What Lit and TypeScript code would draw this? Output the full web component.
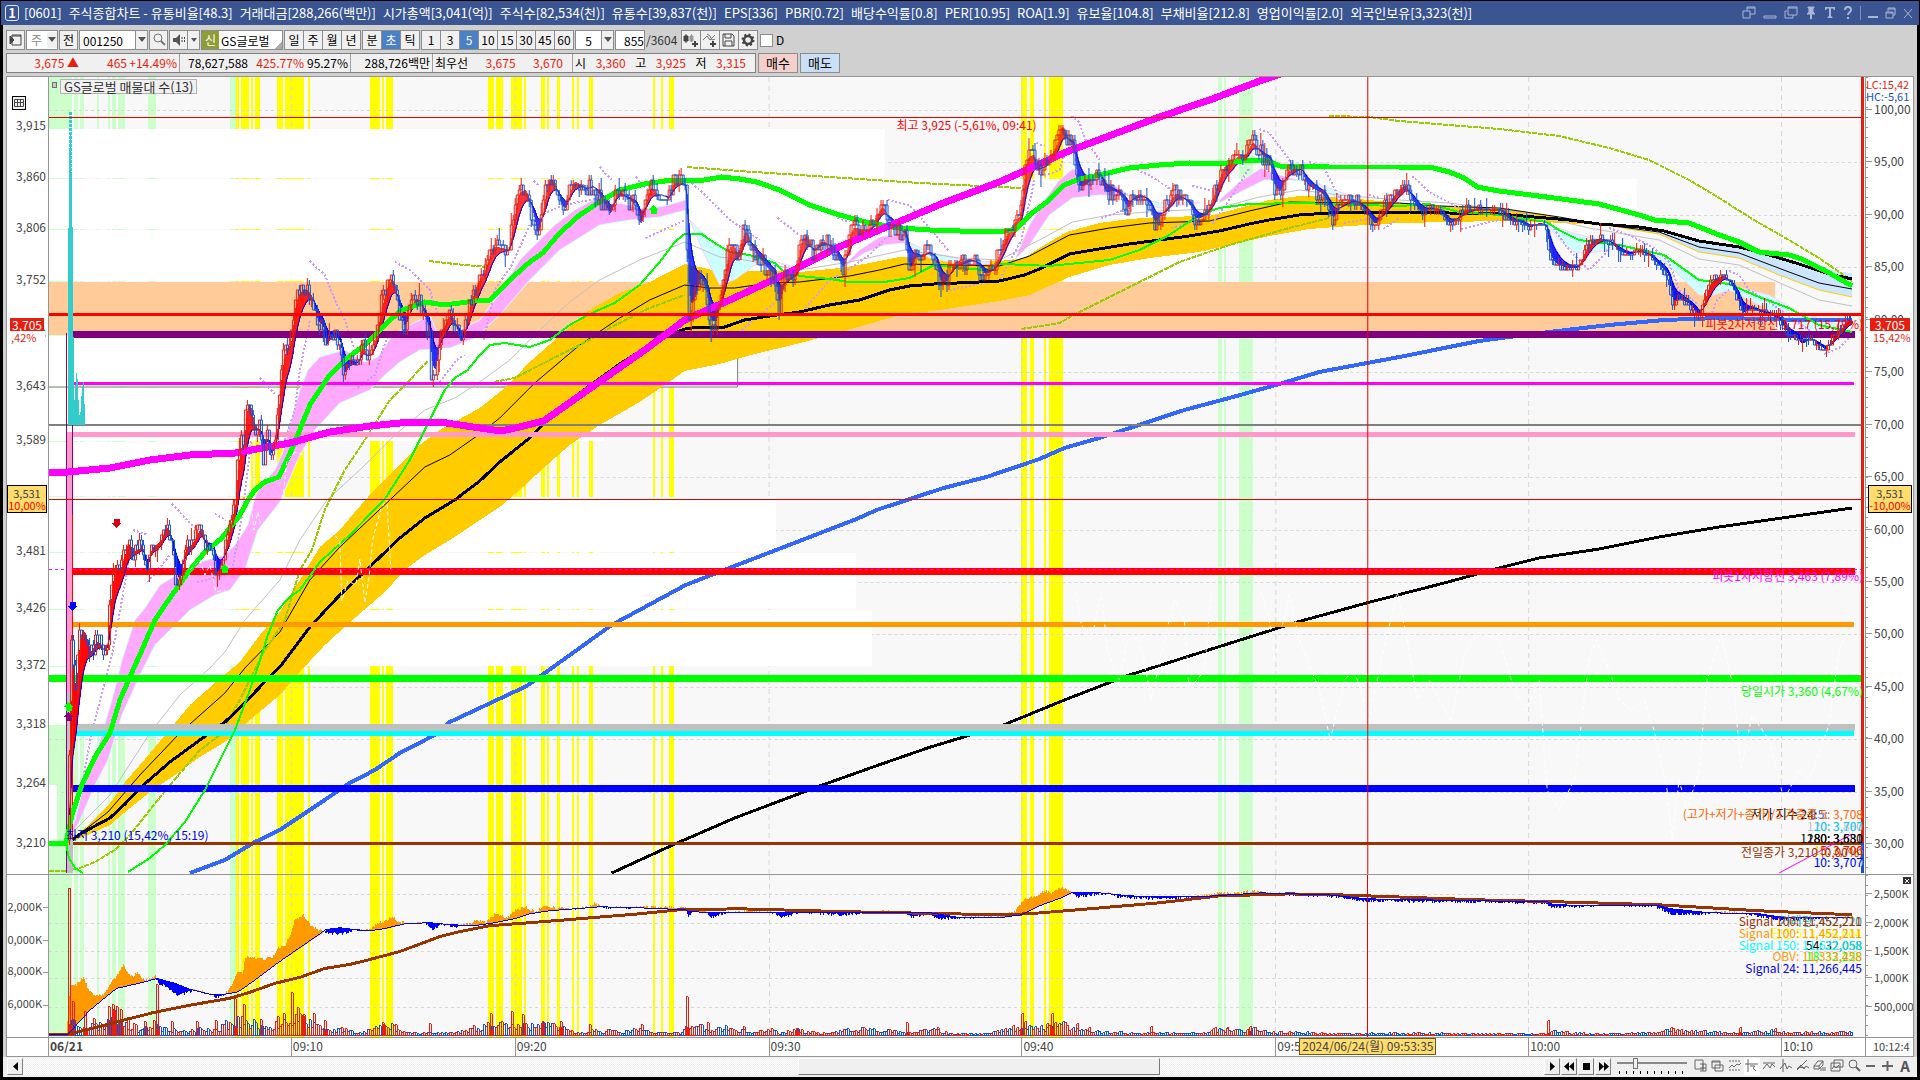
import { LitElement, html, svg, css } from "lit";
import { customElement } from "lit/decorators.js";

type P = [number, number];

/* ---------- coordinate helpers ---------- */
const LEFT = 49, RIGHT = 1866, WIDTH = RIGHT - LEFT;
const MAIN_TOP = 77, MAIN_H = 797;
const SUB_TOP = 875, SUB_H = 163;

const pts = (s: string): P[] =>
  s.trim().split(/\s+/).map((p) => p.split(",").map(Number) as P);
const px = (x: number) => `${((x - LEFT) / WIDTH) * 100}%`;
const pyMain = (y: number) => `${((y - MAIN_TOP) / MAIN_H) * 100}%`;
const pySub = (y: number) => `${((y - SUB_TOP) / SUB_H) * 100}%`;

function at(path: P[], x: number): number {
  if (x <= path[0][0]) return path[0][1];
  for (let i = 1; i < path.length; i++) {
    const [x1, y1] = path[i];
    if (x <= x1) {
      const [x0, y0] = path[i - 1];
      return x1 === x0 ? y1 : y0 + ((y1 - y0) * (x - x0)) / (x1 - x0);
    }
  }
  return path[path.length - 1][1];
}
function random(seed: number) {
  let s = seed;
  return () => {
    s = (s * 1664525 + 1013904223) % 4294967296;
    return s / 4294967296;
  };
}

/* ---------- series ---------- */
const price = pts(`68,840 69,760 70,650 72,620 74,700 76,680 78,640 82,625 86,640 90,655 95,640 100,645 104,655 107,640 110,590 114,560 118,575 122,560
127,540 132,552 137,550 142,545 146,580 150,545 155,545 160,540 166,525 170,535 175,580 180,580 184,545 190,545 196,535 200,525 205,550 212,545 216,580
222,555 226,540 230,520 235,500 236,470 240,440 243,445 246,400 250,405 254,430 260,430 263,460 267,435 271,460 276,430 280,370 285,345 290,345 294,300
300,290 307,290 312,300 317,325 322,325 326,350 330,335 335,335 340,345 343,380 348,365 354,365 358,360 362,340 366,360 372,350 377,325 382,300 386,285
391,278 394,285 398,310 404,330 409,310 413,298 419,300 424,320 429,330 431,375 435,370 440,330 446,320 450,312 456,330 461,345 466,320 470,300 475,285
484,270 492,245 500,248 508,250 514,210 518,190 525,190 530,205 537,238 544,200 548,175 555,185 560,205 565,210 572,180 580,185 586,190 592,185 598,195
604,205 610,215 617,185 622,195 628,200 636,205 640,230 645,200 650,185 656,195 662,195 668,200 673,180 680,180 686,188 688,325 693,300 700,275 706,290
710,325 716,320 724,270 731,240 737,255 745,228 752,250 760,260 768,270 774,275 779,310 783,280 790,275 796,270 800,240 807,235 813,255 820,240 828,245
836,255 843,270 848,245 852,225 860,230 868,230 876,215 882,205 888,220 896,228 905,235 909,275 915,255 922,258 928,250 935,258 940,285 947,280 954,260
962,262 970,258 978,265 984,275 993,270 1000,250 1008,230 1016,220 1020,215 1026,155 1034,155 1038,170 1045,165 1050,155 1056,145 1062,122 1067,140 1073,145
1078,190 1084,185 1090,180 1096,170 1100,175 1105,195 1112,190 1120,195 1128,210 1133,195 1142,195 1150,205 1154,225 1160,215 1168,205 1175,192 1183,198
1190,205 1195,220 1205,215 1212,200 1218,180 1224,165 1230,165 1238,155 1246,155 1252,140 1258,150 1264,158 1270,160 1274,190 1281,190 1288,170 1295,168
1300,165 1306,185 1315,190 1324,195 1333,220 1340,205 1348,200 1356,200 1364,210 1375,225 1381,215 1390,200 1400,188 1406,185 1412,200 1418,210 1425,212
1432,208 1440,212 1450,225 1456,218 1465,210 1478,208 1490,210 1500,210 1511,222 1520,222 1530,228 1540,222 1547,228 1550,260 1558,265 1566,268 1578,268
1585,250 1592,240 1600,238 1610,242 1620,252 1630,255 1638,250 1650,256 1658,265 1668,275 1673,305 1680,298 1690,305 1700,318 1707,290 1714,278 1725,275
1733,288 1738,300 1742,315 1750,308 1760,312 1772,315 1780,320 1788,335 1795,335 1802,345 1810,338 1818,345 1825,350 1832,340 1840,330 1848,318 1853,322`);

const magentaMA = `48,472 68,472 110,468 150,460 190,455 235,453 290,443 330,432 370,426 410,422 440,422 480,428 501,431 520,427 544,421 598,383 648,348
685,320 730,300 784,275 837,248 887,227 944,203 1000,182 1067,152 1160,117 1213,99 1263,80 1284,73`;
const greenMA = `49,843 66,843 72,815 82,785 95,757 110,733 120,700 133,670 142,650 155,620 172,595 190,570 205,552 222,538 240,515 248,500 255,490 265,482
279,477 293,447 310,405 330,375 345,360 365,345 380,330 400,311 425,302 445,305 475,301 490,300 510,280 530,262 543,253 560,233 580,215 600,202 620,190
645,184 665,181 705,180 722,177 740,179 757,182 780,190 810,205 840,215 870,223 900,228 930,230 960,231 1000,232 1017,229 1030,215 1050,200 1065,185
1080,179 1100,175 1130,168 1160,165 1190,163 1220,164 1250,160 1267,160 1280,166 1330,167 1400,167 1430,167 1450,172 1465,178 1478,187 1500,191 1555,198
1600,204 1640,215 1655,220 1690,223 1715,233 1740,242 1760,252 1790,255 1800,258 1825,270 1853,286`;
const blackMA = `68,843 80,834 95,826 110,818 125,804 140,788 170,762 200,740 225,722 240,708 260,687 280,667 310,627 340,595 375,562 400,538 425,518 455,500
480,481 500,462 530,438 545,423 580,393 620,364 650,345 670,335 685,329 700,327 725,327 745,320 770,316 800,312 830,305 860,300 890,290 910,286 935,284
980,282 1000,281 1025,275 1040,269 1070,254 1100,249 1130,244 1160,240 1190,236 1220,231 1250,224 1270,220 1300,215 1330,213 1370,212 1410,212 1450,213
1500,214 1570,220 1600,224 1640,227 1665,231 1700,241 1740,247 1760,252 1800,264 1830,274 1853,279`;
const blackThin = `68,843 108,812 140,775 180,733 225,693 245,668 280,632 310,580 340,547 390,500 425,467 450,455 480,434 500,418 535,383 580,345 620,318
650,300 685,285 710,288 735,288 770,283 800,282 850,276 880,270 905,264 950,265 1000,266 1030,256 1070,235 1110,228 1150,223 1210,221 1250,211 1290,202
1350,203 1400,203 1440,206 1500,208 1560,217 1600,224 1660,232 1700,247 1740,253 1790,272 1820,283 1853,289`;
const greyThin = `75,830 110,795 150,733 180,695 210,668 225,652 245,620 280,580 300,540 327,500 360,470 395,435 425,410 455,398 480,382 510,360 535,335 570,302
600,280 640,260 685,242 720,257 745,260 800,270 850,262 905,250 960,258 1000,260 1040,240 1073,222 1110,215 1160,211 1215,209 1260,197 1300,190 1340,195
1400,200 1450,203 1520,212 1590,228 1660,240 1700,259 1740,265 1790,287 1820,300 1853,306`;
const greenThin = `128,872 150,858 165,845 185,822 205,790 225,750 235,730 250,690 258,667 268,635 278,610 290,597 300,590 320,562 350,535 385,499 410,460
430,420 445,390 455,378 468,370 480,355 490,345 505,343 530,347 550,340 570,325 590,314 615,303 640,285 660,262 675,242 685,234 702,234 715,243 730,252
750,255 775,263 785,272 800,276 830,279 850,282 885,282 910,278 925,270 935,265 960,268 985,270 1000,264 1030,265 1050,266 1090,262 1110,260 1140,250
1170,235 1185,225 1200,215 1220,208 1250,204 1300,203 1360,205 1400,206 1430,204 1460,212 1500,215 1547,222 1560,230 1580,240 1620,245 1665,255 1700,280
1730,284 1760,297 1790,308 1820,325 1853,332`;
const blueMA = `190,873 225,860 255,842 280,830 310,810 350,783 375,770 400,753 435,735 450,722 480,708 527,686 612,625 686,585 735,566 857,519 877,510
944,488 987,477 1040,459 1065,448 1100,438 1185,410 1230,398 1280,384 1320,372 1400,357 1480,341 1510,337 1550,332 1610,325 1665,320 1720,318 1770,319
1800,320 1853,320`;
const blackLong = `612,873 673,845 735,818 820,786 882,764 931,747 1004,725 1065,700 1127,676 1225,645 1298,622 1371,602 1445,583 1500,568 1540,558 1600,549
1660,537 1720,527 1790,517 1853,508`;
const oliveDots = [
  `49,871 66,871 80,868 95,862 115,850 130,835 150,810 170,785 200,750 220,735 240,700 262,655 285,620 300,570 312,550 325,510 345,470 365,440 390,400 410,380 428,361`,
  `429,261 455,264 488,267`,
  `494,382 515,378 550,360 590,340 610,328 650,308 685,295`,
  `687,167 740,171 800,175 860,179 920,183 1000,187 1022,188`,
  `1022,329 1060,323 1080,312 1130,287 1180,262 1230,245 1290,228 1330,218`,
  `1330,116 1370,117 1400,121 1500,129 1560,136 1610,148 1650,160 1690,180 1720,198 1755,220 1790,240 1820,258 1853,281`,
];
const sarDots = [
  `310,261 325,275 335,300 345,320 355,350`, `395,262 410,270 430,290 438,315`, `260,378 276,395`, `172,504 195,528`, `215,514 226,520`, `133,530 148,535`,
  `83,780 92,730 103,690 112,655 122,600 130,555`, `148,582 170,555`, `197,582 225,575`, `232,570 240,530 248,470 251,440`, `285,440 295,410 300,370 310,320`,
  `358,388 375,375 388,335`, `440,382 457,360 465,355`, `484,340 495,290 512,265 530,225`, `540,215 565,205 600,198`, `534,181 540,186`, `600,167 612,180`,
  `636,177 648,190`, `646,238 686,220`, `686,178 700,190 730,220 760,240`, `778,218 800,235`, `838,218 850,222`, `888,200 910,205 930,228 950,252`,
  `742,330 775,303`, `806,308 830,280 840,275`, `848,270 870,255 886,238`, `950,290 1000,280 1022,240 1035,180`, `1072,116 1080,122 1085,138 1100,160`,
  `1037,143 1045,146`, `1045,176 1060,170 1065,155`, `1102,218 1130,208`, `1130,167 1150,175 1175,192`, `1172,228 1200,220`, `1193,186 1213,191`,
  `1213,224 1230,200 1250,168`, `1260,129 1270,133 1290,160 1300,175`, `1310,162 1325,168 1340,198`, `1345,223 1375,218`, `1370,195 1380,198`,
  `1384,229 1400,218`, `1413,176 1430,192 1460,208`, `1462,229 1500,220`, `1550,222 1570,250 1590,270 1605,255 1610,247`,
  `1610,228 1630,235 1655,248 1670,262 1680,290 1700,305`, `1710,320 1718,300 1730,290`, `1730,271 1740,275 1750,290 1770,302 1810,330 1822,338`,
  `1825,354 1840,348 1853,335`,
];
const whiteDots = [
  `325,535 331,531 340,541 342,601 348,581 356,585 360,559 365,603 369,579 373,539 381,509 387,499 391,569`,
  `190,570 200,560 205,575 210,565 216,592 225,590`, `251,500 254,530 258,512 262,530`, `283,500 287,460 295,452 305,455`,
  `1076,592 1082,625 1092,640 1102,592 1108,650 1120,680 1128,640 1140,638 1152,700 1165,640 1175,600 1185,620 1190,690 1205,670 1212,592`,
  `1262,592 1270,620 1275,660 1290,595 1300,640 1320,690 1331,740 1345,680 1355,670 1370,720 1382,660 1398,592 1408,640 1418,700 1430,680 1452,722
1465,655 1480,632 1500,640 1515,690 1527,710 1540,680 1548,790 1560,810 1575,780 1582,725 1590,660 1597,640 1610,670 1620,700 1632,710 1645,700
1655,730 1668,790 1673,840 1680,780 1688,810 1700,770 1708,680 1722,635 1735,690 1742,770 1753,715 1770,740 1785,800 1800,770 1810,780 1830,725
1840,650 1850,630`,
];

const cloud = (upper: string, lower: string) =>
  [...pts(upper), ...pts(lower).reverse()].map((p) => p.join(",")).join(" ");

const goldCloud = cloud(
  `68,843 85,828 108,806 125,782 140,765 165,735 190,705 215,683 240,662 260,635 280,612 300,580 320,547 340,530 355,512 370,495 400,465 420,445 440,430
480,408 505,388 530,362 555,340 590,310 620,293 650,282 685,264 700,267 720,272 740,272 770,270 800,272 840,268 870,263 900,257 930,256 960,262 1000,261
1025,258 1040,248 1067,232 1100,223 1130,219 1160,217 1210,216 1240,208 1270,200 1300,196 1340,197 1380,201 1420,205 1460,207 1500,208 1545,215 1600,224`,
  `68,843 90,834 110,825 130,808 150,792 175,775 200,757 225,742 250,720 280,695 300,672 325,645 355,618 385,592 405,570 425,555 450,540 480,520 500,507
520,490 545,467 570,445 600,425 640,402 665,385 685,371 720,364 755,354 780,348 805,342 830,335 855,328 900,315 940,310 980,304 1000,301 1030,295 1070,277
1110,265 1150,258 1200,252 1230,245 1270,236 1310,229 1350,226 1400,223 1450,222 1500,221 1545,222 1600,225`
);
const pinkClouds = [
  cloud(
    `68,843 75,820 85,780 100,740 112,700 122,660 135,620 145,608 160,585 180,573 200,562 225,555 235,545 248,525 255,497 262,484 275,470 283,452 290,425
300,390 308,370 320,357 345,350 365,362 378,357 393,335 410,325 430,315 440,340 455,332 480,320 500,293 520,260 535,245 555,225 575,210 597,198 610,205
620,203 640,208 650,208 665,206 686,200`,
    `68,843 80,820 95,785 108,760 122,715 140,675 155,645 170,630 190,610 215,595 230,590 245,570 258,530 280,502 285,490 300,455 315,430 340,403 370,390
385,375 400,362 420,350 450,348 475,338 500,315 530,280 560,250 600,225 630,220 660,217 686,210`
  ),
  cloud(`840,270 860,250 880,237 905,233`, `840,270 865,253 885,245 905,243`),
  cloud(`1015,260 1030,225 1045,200 1060,180 1073,169 1080,170 1100,180 1115,185 1130,195`, `1015,260 1030,245 1050,215 1073,198 1100,195 1130,196`),
  cloud(`1220,200 1240,182 1262,168 1280,175 1320,185`, `1220,203 1245,190 1265,180 1290,180 1320,183`),
];
const cyanClouds = [
  cloud(`688,218 700,230 715,245 740,253 770,258 790,268`, `690,220 705,255 720,285 735,280 755,265 780,263 800,268`),
  cloud(`905,240 930,252 960,259 990,262`, `905,244 930,258 960,264 990,264`),
  cloud(`1130,195 1160,203 1200,202`, `1130,198 1160,208 1200,203`),
  cloud(`1320,184 1340,192 1360,198`, `1320,185 1340,200 1360,206`),
  cloud(
    `1545,222 1570,232 1600,240 1650,250 1680,265 1700,278 1730,285 1770,295 1800,312 1853,330`,
    `1547,222 1560,240 1575,252 1590,253 1620,248 1640,250 1660,257 1680,275 1700,295 1715,295 1730,290 1760,305 1790,320 1820,335 1853,335`
  ),
];
const blueCloud = cloud(
  `1600,224 1660,232 1700,240 1740,246 1800,262 1840,272 1853,273`,
  `1600,224 1660,234 1700,252 1740,258 1780,275 1820,290 1853,297`
);

const bandsGreen: P[] = [[49, 72], [74, 78], [80, 84], [97, 99], [108, 110], [112, 116], [118, 125], [148, 156], [230, 236], [1219, 1223], [1225, 1227], [1240, 1254]];
const bandsYellow: P[] = [
  [236, 239], [241, 249], [251, 253], [255, 260], [277, 283], [285, 304], [308, 310], [370, 380], [382, 384], [386, 393], [488, 494], [496, 503],
  [511, 522], [524, 526], [541, 545], [547, 549], [557, 560], [572, 574], [577, 579], [589, 593], [653, 655], [661, 663], [669, 674],
  [1022, 1028], [1031, 1035], [1045, 1047], [1050, 1064],
];
const gridX = [291, 515, 769, 1022, 1276, 1529, 1782];
const gridMain = [110, 162, 215, 267, 320, 372, 425, 477, 530, 582, 634, 687, 739, 792, 844];
const gridSub = [894, 923, 951, 979, 1008];

/* price-by-volume boxes: top, bottom, right edge */
const profile: [number, number, number][] = [
  [129, 178, 885], [179, 229, 1638], [230, 281, 1209], [336, 387, 738], [388, 441, 604], [442, 496, 250],
  [497, 552, 776], [553, 609, 856], [610, 666, 872], [667, 725, 228], [785, 843, 57],
];

/* level lines: y centre, thickness, colour, from, to */
const levels: [number, number, string, number, number][] = [
  [314.5, 3, "#ff0000", 49, 1862], [334.5, 7, "#800080", 72, 1856], [383.5, 3, "#ff00ff", 73, 1855], [425, 2, "#808080", 49, 1862],
  [434.5, 5, "#ff99cc", 72, 1856], [571.5, 7, "#ff0000", 72, 1856], [624.5, 5, "#ff9900", 73, 1855], [678.5, 7, "#00ff00", 49, 1862],
  [727.5, 7, "#c0c0c0", 77, 1856], [733.5, 5, "#00ffff", 73, 1855], [788.5, 7, "#0000ff", 73, 1856], [843.5, 3, "#993300", 49, 1862],
];

const signal = pts(`49,1035 68,1035 80,1022 90,1011 108,996 117,989 130,986 147,982 157,979 175,984 190,990 210,995 225,995 237,993 245,988 260,977 280,962
300,948 316,937 326,930 340,928 355,930 370,931 385,929 405,924 430,923 450,925 475,926 495,923 515,919 530,914 550,911 575,909 600,907 640,908 686,910
690,912 730,913 780,913 870,913 930,913 960,918 1000,918 1022,915 1040,906 1062,898 1072,893 1100,893 1130,896 1160,897 1200,897 1230,895 1262,893 1330,895
1368,899 1480,901 1548,902 1555,905 1620,906 1660,906 1672,909 1710,913 1760,914 1780,917 1800,918 1853,918`);
const obv = pts(`49,1035 66,1035 68,1010 70,985 74,987 78,984 83,978 88,990 95,997 104,995 110,985 114,980 118,975 123,966 130,978 137,974 145,982 155,977
158,985 165,987 177,997 185,994 195,991 210,995 218,999 225,995 232,985 237,972 242,975 245,958 255,959 262,960 272,958 278,948 284,946 290,935 294,920
303,915 310,925 318,930 326,933 342,934 355,930 368,930 378,923 387,920 392,916 398,922 405,923 425,923 433,930 440,924 455,927 470,923 475,920 485,922
495,914 507,918 515,910 525,907 535,912 545,905 552,907 570,909 588,907 594,903 602,907 630,908 648,907 660,907 686,908 688,918 694,909 705,910 710,918
725,913 745,911 775,913 780,918 800,912 840,915 880,911 905,912 910,917 930,914 938,919 960,918 1000,916 1015,912 1024,900 1036,896 1045,891 1052,893
1060,888 1064,888 1072,893 1080,897 1090,895 1110,893 1120,897 1160,899 1200,896 1220,893 1240,893 1252,891 1270,893 1300,895 1330,896 1368,901 1480,902
1548,903 1550,907 1570,907 1600,905 1655,906 1672,914 1700,914 1720,912 1740,913 1770,918 1780,920 1800,919 1853,917`);
const brownSignal = `49,1035 68,1035 90,1030 120,1022 155,1013 190,1006 230,999 250,993 275,984 300,978 325,969 350,965 370,960 400,952 440,937 460,932 490,926
530,923 580,919 640,914 680,910 740,909 850,912 950,914 1000,915 1030,914 1090,909 1160,903 1220,896 1290,894 1340,895 1480,900 1560,902 1660,905 1760,911
1853,915`;
const volumeSpikes = pts(`69,888 73,1002 85,1012 94,1019 109,1007 113,1005 117,1007 121,1010 128,1018 157,985 145,1022 172,1022 197,1022 216,1021 235,999
244,1005 261,1020 278,1017 284,1014 292,993 298,1008 303,1016 314,1014 325,1021 342,1028 383,1023 396,1025 430,1024 491,1014 512,1012 523,1015 543,1022
561,1022 590,1025 642,1025 687,997 708,1023 744,1027 797,1029 907,1023 938,1028 1023,1014 1026,1022 1048,1024 1053,1014 1078,1024 1090,1028 1152,1027
1214,1029 1228,1028 1251,1027 1549,1021 1672,1028 1741,1028 1776,1029`);
const volumeEnvelope = pts(`68,22 75,18 90,12 105,14 112,26 125,16 140,8 155,14 170,9 185,4 200,8 210,6 225,14 240,20 255,14 270,12 285,20 300,22 315,12 330,6
345,8 360,4 380,10 395,12 405,4 440,3 460,4 475,10 492,14 515,16 530,12 550,12 565,8 580,3 600,7 620,4 640,8 655,3 680,3 690,14 710,8 730,9 750,4 770,7 780,3
800,7 820,2 840,5 860,8 885,7 905,3 935,7 950,2 990,2 1000,7 1020,10 1030,14 1045,8 1060,14 1075,9 1090,6 1110,4 1150,3 1200,3 1220,9 1240,6 1255,9 1270,4
1300,4 1340,2 1400,3 1480,2 1545,2 1555,6 1575,3 1600,2 1655,3 1670,7 1690,5 1720,5 1745,3 1775,6 1790,3 1820,4 1853,4`);

/* ---------- derived drawing data ---------- */
const up = "#e61e0f", down = "#1450c8";

function candles() {
  const rnd = random(11);
  const ups: string[] = [], downs: string[] = [];
  let open = 840;
  for (let x = 69; x <= 1852; x += 2) {
    const calm = x > 1400 ? 5 : 16;
    const close = Math.round((at(price, x) + (rnd() - 0.5) * calm) / 5) * 5;
    const top = Math.min(open, close), bottom = Math.max(open, close);
    const high = top - (rnd() < 0.4 ? 5 : 0) - (rnd() < 0.14 ? 7 : 0);
    const low = bottom + (rnd() < 0.4 ? 5 : 0) + (rnd() < 0.14 ? 7 : 0);
    const rising = close < open || (close === open && rnd() < 0.5);
    const d = `M${x - 0.5},${top}h2V${bottom}h-2zM${x + 0.5},${high}V${top}M${x + 0.5},${bottom}V${low}`;
    (rising ? ups : downs).push(d);
    open = close;
  }
  return { ups: ups.join(""), downs: downs.join("") };
}

function ribbon() {
  let fast = 840, slow = 840;
  const red: string[] = [], blue: string[] = [], line: string[] = [];
  for (let x = 68; x <= 1853; x += 1) {
    const v = at(price, x);
    fast += (v - fast) * 0.4;
    slow += (v - slow) * 0.12;
    const seg = `M${x + 0.5},${Math.round(fast)}V${Math.round(slow)}`;
    (fast < slow ? red : blue).push(seg);
    line.push(`${x},${Math.round(slow)}`);
  }
  return { red: red.join(""), blue: blue.join(""), line: line.join(" ") };
}

function obvFill() {
  const rnd = random(5);
  const above: string[] = [], below: string[] = [];
  for (let x = 67; x <= 1853; x += 1) {
    const s = at(signal, x);
    const o = at(obv, x) + (rnd() - 0.5) * 3;
    if (o < s) above.push(`M${x + 0.5},${o.toFixed(0)}V${s.toFixed(0)}`);
    else below.push(`M${x + 0.5},${s.toFixed(0)}V${o.toFixed(0)}`);
  }
  return { above: above.join(""), below: below.join("") };
}

function volume() {
  const rnd = random(23);
  const ups: string[] = [], downs: string[] = [];
  const bar = (x: number, h: number) => `M${x - 0.5},1036.5v${-Math.round(h)}h2v${Math.round(h)}z`;
  for (let x = 70; x <= 1852; x += 2) {
    const h = at(volumeEnvelope, x) * (0.35 + rnd() * 0.75);
    (rnd() < 0.42 ? ups : downs).push(bar(x, Math.max(1, h)));
  }
  for (const [x, y] of volumeSpikes) ups.push(bar(x, 1036 - y));
  return { ups: ups.join(""), downs: downs.join("") };
}

const candleData = candles();
const ribbonData = ribbon();
const obvData = obvFill();
const volumeData = volume();

const line = (points: string, color: string, width: number, dash = "") =>
  svg`<polyline points=${points} fill="none" stroke=${color} stroke-width=${width} stroke-dasharray=${dash || "none"}/>`;

const arrow = (x: number, y: number, color: string, dir: 1 | -1) =>
  svg`<path fill=${color} d=${`M${x},${y + 5 * dir}l-5,${-5 * dir}h2v${-4 * dir}h6v${4 * dir}h2z`}/>`;

const bands = (top: number, h: number) => svg`
  ${bandsGreen.map(([a, b]) => svg`<rect x=${a} y=${top} width=${b - a} height=${h} fill="#ccffcc"/>`)}
  ${bandsYellow.map(([a, b]) => svg`<rect x=${a} y=${top} width=${b - a} height=${h} fill="#ffff00"/>`)}`;

const grid = (ys: number[], top: number, h: number) => svg`
  <g stroke="#d8d8d8" stroke-dasharray="3 3" fill="none">
    ${ys.map((y) => svg`<path d=${`M${LEFT},${y + 0.5}H1862`}/>`)}
    ${gridX.map((x) => svg`<path stroke-dasharray="5 4" d=${`M${x + 0.5},${top}v${h}`}/>`)}
  </g>`;

@customElement("price-panel")
export class PricePanel extends LitElement {
  static styles = css`
    :host { display: block; position: relative; overflow: hidden; background: #f8f8f8; }
    svg { position: absolute; inset: 0; width: 100%; height: 100%; }
    .note { position: absolute; line-height: 12px; margin-top: -6px; white-space: nowrap; font-size: 12px; }
    .note.end { right: 2px; }
    .legend {
      position: absolute; left: 11px; top: 2px; height: 15px; line-height: 13px; padding: 0 3px; box-sizing: border-box;
      border: 1px solid #b4b4b4; background: #f0f0f0; color: #333; white-space: nowrap;
    }
    .dot { position: absolute; left: 3px; top: 5px; width: 5px; height: 6px; box-sizing: border-box; border: 1px solid #707070; background: #c8c8c8; }
    .red { color: #ff0000; } .navy { color: #0000e0; } .magenta { color: #ff00ff; } .green { color: #00ff00; }
    .orange { color: #ff6600; } .black { color: #000; } .silver { color: #c0c0c0; } .cyan { color: #00ccff; }
    .brown { color: #993300; } .yellow { color: #ffcc00; } .blue { color: #0000ff; } .pale { color: #cce6ff; } .sky { color: #3366ff; }
  `;
  private notes: [string, number, number | null, string][] = [
    ["최고 3,925 (-5,61%, 09:41)", 125, 897, "red"],
    ["최저 3,210 (15,42%, 15:19)", 835, 66, "navy"],
    ["피봇2차저항선 3,717 (15,79%)", 324, null, "red"],
    ["피봇1차저항선 3,463 (7,89%)", 576, null, "magenta"],
    ["당일시가 3,360 (4,67%)", 691, null, "green"],
    ["저가 지수 24:", 814, 1752, "black"],
    ["15:", 814, 1812, "sky"],
    ["(고가+저가+종가)/3 가중종 5: 3,708", 814, null, "orange"],
    ["120: 3,880", 826, null, "silver"],
    ["10: 3,707", 826, null, "cyan"],
    ["1280: 3,680", 838, null, "black"],
    ["180: 3,531", 838, null, "black"],
    ["15: 3,706", 850, null, "yellow"],
    ["5: 3,706", 850, null, "red"],
    ["전일종가 3,210 (0,00%)", 852, null, "brown"],
    ["30: 3,709", 862, null, "pale"],
    ["10: 3,707", 862, null, "blue"],
  ];
  render() {
    return html`
      <svg viewBox="49 77 1817 797" preserveAspectRatio="none" shape-rendering="crispEdges" aria-hidden="true">
        ${bands(77, 797)}
        ${grid(gridMain, 77, 797)}
        ${profile.map(([t, b, r]) => svg`<rect x="49" y=${t} width=${r - 49} height=${b - t} fill="#fff"/>`)}
        <rect x="49" y="282" width="1727" height="53" fill="#ffcc99"/>
        ${[178, 229, 281, 387, 441, 496, 552, 609, 666].map((y) => svg`
          ${bandsGreen.slice(0, 9).map(([a, b]) => svg`<rect x=${a} y=${y} width=${b - a} height="1" fill="#ccffcc"/>`)}
          ${bandsYellow.slice(0, 20).map(([a, b]) => svg`<rect x=${a} y=${y} width=${b - a} height="1" fill="#ffff00"/>`)}`)}
        <path d="M49,387H738V336" fill="none" stroke="#808080"/>
        <polygon points=${goldCloud} fill="#ffcc00"/>
        <polygon points=${blueCloud} fill="#cce6ff"/>
        ${pinkClouds.map((p) => svg`<polygon points=${p} fill="#ffaaff" stroke="#ccffff"/>`)}
        ${cyanClouds.map((p) => svg`<polygon points=${p} fill="#ccffff" stroke="#ffccff"/>`)}
        ${line(`1600,224 1660,234 1700,252 1740,258 1780,275 1820,290 1853,297`, "#ffcc00", 1)}
        ${line(greyThin, "#c0c0c0", 1)}
        ${line(blackThin, "#000", 1)}
        ${oliveDots.map((p) => line(p, "#99cc00", 2, "5 1"))}
        ${sarDots.map((p) => line(p, "#cc99ff", 2, "2 2"))}
        ${line(blackLong, "#000", 3)}
        ${line(blueMA, "#3366ff", 4)}
        ${line(blackMA, "#000", 3)}
        ${levels.map(([y, w, c, a, b]) => svg`<rect x=${a} y=${y - w / 2} width=${b - a} height=${w} fill=${c}/>`)}
        <path d="M49,569.5H1862" stroke="#ff00ff" stroke-dasharray="3 3"/>
        <rect x="67" y="432" width="6" height="260" fill="#ff99cc"/>
        <rect x="67" y="692" width="6" height="181" fill="#c0c0c0"/>
        <path d="M66.5,333V873" stroke="#800080"/>
        <path d="M72.5,333V515" stroke="#800080"/>
        <path d="M72.5,515V840" stroke="#ff0000"/>
        <polygon fill="#33cccc" points="68,425 68,270 69,190 70,112 72,190 73,260 74,408 76,378 77,368 79,410 80,420 82,388 84,380 85,425"/>
        <path d="M70.5,112V270" stroke="#33cccc" stroke-width="3" stroke-dasharray="3 1"/>
        ${line(`66,843 69,858 75,868 83,873`, "#00ff00", 2)}
        ${line(greenThin, "#00ff00", 2)}
        <path d=${ribbonData.red} stroke="#ff0000"/>
        <path d=${ribbonData.blue} stroke="#0000ff"/>
        ${line(ribbonData.line, "#0000e0", 1)}
        ${line(greenMA, "#00ff00", 5)}
        ${line(magentaMA, "#ff00ff", 7)}
        <path d=${candleData.ups} fill="none" stroke=${up}/>
        <path d=${candleData.downs} fill="none" stroke=${down}/>
        <rect x="73" y="313" width="1789" height="3" fill="#ff0000"/>
        <path d="M1780,873L1853,834" stroke="#ff00ff"/>
        ${whiteDots.map((p) => line(p, "#fff", 1, "4 3"))}
        ${arrow(117, 523, "#dc0014", 1)} ${arrow(73, 606, "#0000ff", 1)} ${arrow(69, 707, "#00ff00", -1)}
        ${arrow(69, 717, "#800080", -1)} ${arrow(225, 569, "#00ff00", -1)} ${arrow(654, 210, "#00ff00", -1)}
        <path d="M49,117.5H1862M49,499.5H1862M1368.5,77V874" stroke="#e60000"/>
        <rect x="1862" y="77" width="3" height="766" fill=${up}/>
        <rect x="1862" y="843" width="3" height="30" fill=${down}/>
      </svg>
      <span class="dot"></span>
      <span class="legend">GS글로벌 매물대 수(13)</span>
      ${this.notes.map(([text, y, x, tone]) => html`
        <span class="note ${tone} ${x === null ? "end" : ""}" style=${x === null ? `top:${pyMain(y)}` : `top:${pyMain(y)};left:${px(x)}`}>${text}</span>`)}
    `;
  }
}

@customElement("volume-panel")
export class VolumePanel extends LitElement {
  static styles = css`
    :host { display: block; position: relative; overflow: hidden; background: #f8f8f8; }
    svg { position: absolute; inset: 0; width: 100%; height: 100%; }
    .note { position: absolute; right: 3px; line-height: 12px; margin-top: -6px; white-space: nowrap; font-size: 12px; }
    .brown { color: #993300; } .orange { color: #ff9900; } .yellow { color: #ffff00; } .cyan { color: #00ffff; }
    .black { color: #000; } .lime { color: #00ff00; } .blue { color: #0000ff; } .teal { color: #339999; }
  `;
  private notes: [string, number, string][] = [
    ["거래량: 452,220", 921, "teal"], ["Signal 100: 11,452,211", 921, "brown"],
    ["단순 5: 3,489,604", 933, "yellow"], ["Signal 100: 11,452,211", 933, "orange"],
    ["54: 32,058", 945, "black"], ["Signal 150: 11,622,058", 945, "cyan"],
    ["18: 32,228", 957, "lime"], ["OBV: 11,333,458", 957, "orange"],
    ["Signal 24: 11,266,445", 969, "blue"],
  ];
  render() {
    return html`
      <svg viewBox="49 875 1817 163" preserveAspectRatio="none" shape-rendering="crispEdges" aria-hidden="true">
        ${bands(875, 163)}
        ${grid(gridSub, 875, 163)}
        <path d=${obvData.above} stroke="#ff9900"/>
        <path d=${obvData.below} stroke="#0000ff"/>
        <path d=${volumeData.downs} fill="none" stroke=${down}/>
        <path d=${volumeData.ups} fill="none" stroke=${up}/>
        ${line(brownSignal, "#993300", 3)}
        ${line(signal.map((p) => p.join(",")).join(" "), "#0000ff", 1)}
        <path d="M1368.5,875V1038" stroke="#e60000"/>
      </svg>
      ${this.notes.map(([text, y, tone]) => html`<span class="note ${tone}" style="top:${pySub(y)}">${text}</span>`)}
    `;
  }
}

/* ---------- icons ---------- */
const icon = (body: unknown, w = 16, h = 14) => html`<svg width=${w} height=${h} viewBox="0 0 ${w} ${h}" aria-hidden="true">${body}</svg>`;
const caret = icon(svg`<path d="M1 4h8l-4 5z" fill="#555"/>`, 10, 14);

const winIcons: [string, unknown, number][] = [
  ["새 창", svg`<path d="M1 5h7v7H1zM5 5V1h8v7H8M5 2h8" />`, 14],
  ["숨기기", svg`<path d="M1 10h12v2H1z"/>`, 14],
  ["복사", svg`<path d="M4 1h9v8H4zM4 2h9M3 5H1v7h8V9"/>`, 14],
  ["고정", svg`<path fill="currentColor" d="M3 1h6v1H8v4l2 2H2l2-2V2H3zM5.500 8v5h1V8z"/>`, 12],
  ["글꼴", svg`<path fill="currentColor" stroke="none" d="M1 1h10v3h-1l-1-1.500H7V10l1.500 1v1h-5v-1L5 10V2.500H3L2 4H1z"/>`, 12],
  ["도움말", svg`<path stroke-width="2" d="M2 4c0-4 6-4 6 0 0 2.500-3 2-3 5M5 11v2"/>`, 10],
];
const sysIcons: [string, unknown, number][] = [
  ["최소화", svg`<path fill="currentColor" stroke="none" d="M0 10h10v2H0z"/>`, 10],
  ["이전 크기", svg`<path d="M1 6h7v6H1zM1 7h7M3 5V2h7v7H8M3 3h7"/>`, 11],
  ["닫기", svg`<path d="M1 3l8 9M9 3l-8 9"/>`, 10],
];
const tools: [string, unknown][] = [
  ["차트 추가", svg`<path d="M1 1h8v9H1zM6 5h6v7H6M9 5v7M6 9h6"/>`],
  ["창 겹치기", svg`<path d="M1 2h8v7H1zM1 3h8M4 6h8v6H4z" fill="#eee"/>`],
  ["범위", svg`<path stroke-dasharray="2 1" d="M1 2h12M1 11h12"/><path d="M1 9l3-3 2 2 3-3 2 1 2-2"/>`],
  ["십자선", svg`<path d="M0 5h13M3 0v13"/><path d="M5 7h5L8 9l3 3"/>`],
  ["추세선", svg`<path d="M1 4h12M1 10l4-5 3 4 2-4 3 3"/>`],
  ["수직선", svg`<path d="M4 0v13M1 10l5-6 2 6 2-3 3 2"/>`],
  ["각도선", svg`<path d="M1 11L11 1M1 10l4-4 3 4 2-3 3 2M3 8l6 1"/>`],
  ["지우개", svg`<path d="M1 7l4-5h5l-4 5zM1 7v3h5V7M6 10l4-4V2M8 12V9M10 12V8M12 12V8"/>`],
  ["이미지", svg`<path d="M4 1h9v7H4zM1 4h9v8H1z" fill="#eee"/><path d="M2 10l2-3 2 2 3-3"/>`],
  ["돋보기", svg`<circle cx="6" cy="5" r="4"/><path stroke-width="2" d="M9 8l4 4"/>`],
  ["축소", svg`<path stroke-width="2" d="M2 7h9"/>`],
  ["확대", svg`<path stroke-width="2" d="M1 7h11M6.500 2v10"/>`],
];

@customElement("app-root")
export class AppRoot extends LitElement {
  static styles = css`
    :host {
      display: block; color: #000; background: #000;
      font: 13px/14px "Noto Sans CJK KR", "Liberation Sans", sans-serif;
    }
    * { box-sizing: border-box; }
    button, input, select { font: inherit; color: inherit; margin: 0; padding: 0; border-radius: 0; }
    button { display: inline-flex; align-items: center; justify-content: center; }
    .window { min-height: 100vh; display: flex; flex-direction: column; padding: 1px 0 3px; }
    .title { height: 24px; display: flex; align-items: center; gap: 5px; background: #3a5592; color: #fff; padding: 0 6px 0 4px; margin: 0 1px; white-space: nowrap; }
    .title h1 { margin: 0; font: inherit; flex: 1; min-width: 0; display: flex; gap: 7px; }
    .num { width: 14px; height: 16px; border: 1px solid #dfe6f5; border-radius: 3px; text-align: center; font-weight: bold; line-height: 14px; }
    .tray { display: flex; align-items: center; gap: 7px; color: #a9b5d6; }
    .tray button { border: 0; background: none; height: 16px; }
    .tray svg { fill: none; stroke: currentColor; }
    .bar { width: 1px; height: 14px; background: #7d8fbe; }
    .body { flex: 1; display: flex; flex-direction: column; background: #d0d0d0; margin: 0 3px; padding: 5px 3px 0; }
    .tools { display: flex; height: 20px; gap: 1px; align-items: stretch; font-size: 12px; }
    .group { display: flex; border: 1px solid #8c8c8c; background: #f0f0f0; }
    .group > * + * { border-left: 1px solid #8c8c8c !important; }
    .group button { border: 0; background: #f0f0f0; width: 18px; }
    .group > * + button, .group > * + input { box-sizing: content-box; }
    .group button.on { background: #4a80c4; color: #fff; }
    .group button.slim { width: 11px; }
    .group button.wide { width: 17px; }
    .group input, .name input { border: 0; background: #fff; outline: 0; height: 18px; }
    .period { width: 32px; border: 1px solid #8c8c8c; background: #fff; color: #888; padding: 0 4px; appearance: none; }
    .drop { position: relative; display: flex; }
    .drop svg { position: absolute; right: 1px; top: 2px; background: #f0f0f0; pointer-events: none; height: 16px; }
    .code { width: 55px; padding-left: 3px !important; }
    .name { display: flex; background: #fff linear-gradient(135deg, transparent 50%, #aaa 50%) right bottom / 7px 7px no-repeat; border: 1px solid #8c8c8c; width: 82px; }
    .tag { width: 17px; background: #8f9e34; color: #fff; text-align: center; line-height: 18px; }
    .name input { width: 54px; padding-left: 2px; }
    .spin { width: 25px; text-align: center; }
    .count { width: 28px; text-align: right; }
    .total { align-self: center; color: #333; width: 34px; }
    .check { display: flex; align-items: center; gap: 3px; padding-left: 1px; }
    .check input { appearance: none; width: 13px; height: 13px; background: #fff; border: 1px solid #8c8c8c; }
    .group svg { fill: none; stroke: #444; flex: none; }
    .group button.slim svg, .group button.arrow svg { stroke: none; }
    .quotes { display: flex; margin-top: 3px; gap: 2px; height: 20px; line-height: 18px; font-size: 12px; white-space: nowrap; }
    .strip { display: flex; border: 1px solid #808080; background: #f0f0f0; width: 750px; }
    .cell { display: flex; justify-content: flex-end; padding: 0 2px; text-align: right; }
    .cell + .cell { border-left: 1px solid #a0a0a0; }
    .c1 { width: 172px; } .c2 { width: 171px; } .c3 { width: 82px; } .c4 { width: 140px; justify-content: space-between; padding: 0 9px 0 2px; }
    .c5 { flex: 1; justify-content: space-between; padding: 0 9px 0 2px; }
    .w1 { width: 70px; } .w2 { width: 48px; } .w3 { flex: 1; }
    .w4 { width: 66px; } .w5 { width: 56px; }
    .rise { color: #e61e0f; }
    .order { width: 40px; border: 1px solid #8c8c8c; font-size: 13px; }
    .buy { background: #f5cfcb; } .sell { background: #c9dff5; }
    .chart {
      flex: 1; display: grid; margin-top: 3px; background: #fff; border: 1px solid #969696;
      grid-template-columns: 42px minmax(0, 1fr) 48px; grid-template-rows: minmax(300px, 797fr) minmax(100px, 163fr) 19px; color: #444;
    }
    .chart > * { min-width: 0; min-height: 0; }
    .axis { position: relative; overflow: hidden; }
    .left { border-right: 1px solid #969696; }
    .right { border-left: 1px solid #969696; }
    .sub { border-top: 1px solid #969696; }
    .chart volume-panel { border-top: 1px solid #969696; }
    .lab { position: absolute; line-height: 12px; margin-top: -7px; white-space: nowrap; font-size: 12px; }
    .left .lab { right: 2px; }
    .right .lab { left: 8px; }
    .right .lab::before { content: ""; position: absolute; left: -8px; top: 6px; width: 6px; height: 1px; background: #969696; }
    .sub .lab, .right .lab.top { font-size: 11px; }
    .right .lab.top { left: 0; }
    .right .lab.top::before { display: none; }
    .sub.left .lab::after { content: ""; display: inline-block; width: 5px; height: 1px; margin-left: 1px; vertical-align: middle; background: #969696; }
    .sub.left .lab { right: 0; }
    .hc { color: #1450c8; }
    .minor { position: absolute; left: 0; top: 0; width: 2px; height: 100%; background: repeating-linear-gradient(#969696 0 1px, transparent 1px 10px); }
    .now { position: absolute; z-index: 1; line-height: 13px; margin-top: -7px; height: 13px; background: #e61e0f; color: #fff; text-align: center; font-size: 12px; }
    .pct { position: absolute; z-index: 1; line-height: 12px; margin-top: -6px; color: #e61e0f; background: #fff; font-size: 11px; }
    .cross { position: absolute; z-index: 1; margin-top: -14px; height: 28px; line-height: 12px; background: #ffdc6e; border: 1px solid #000; text-align: center; font-size: 11px; padding-top: 1px; }
    .cross em { display: block; font-style: normal; color: #f00; }
    .left .now { left: 3px; width: 34px; } .left .pct { left: 4px; width: 34px; } .left .cross { left: 0; width: 40px; white-space: nowrap; }
    .right .now { left: 4px; width: 40px; } .right .pct { left: 7px; } .right .cross { left: 2px; width: 44px; white-space: nowrap; }
    .table { position: absolute; left: 5px; top: 19px; width: 14px; height: 14px; border: 1px solid #000; background: #f0f0f0; padding: 0; }
    .close { position: absolute; right: 2px; top: 2px; width: 8px; height: 7px; border: 0; background: #333; padding: 0; }
    .close svg { stroke: #fff; }
    .time { border-top: 1px solid #969696; position: relative; overflow: hidden; font-size: 12px; line-height: 16px; white-space: nowrap; }
    .time .tick { position: absolute; top: 0; bottom: 0; border-left: 1px solid #969696; padding-left: 1px; }
    .time .first { border: 0; font-weight: bold; }
    .time .mark { position: absolute; top: 0; bottom: 1px; line-height: 14px; padding: 0 2px; border: 1px solid #6e5a14; background: #ffdc6e; }
    .time.end { padding-left: 7px; font-size: 11px; }
    .foot { display: flex; height: 20px; align-items: center; background: #efefef; margin: 0 -3px; padding: 0 4px 2px; }
    .foot button { border: 1px solid; border-color: #fff #808080 #808080 #fff; background: #efefef; width: 16px; height: 17px; }
    .track { flex: 1; height: 17px; display: flex; background: repeating-conic-gradient(#fff 0 25%, #eee 0 50%) 0 0 / 2px 2px; }
    .lead { flex: 777; } .tail { flex: 385; }
    .track .thumb { flex: 361; width: auto; border: 1px solid; border-color: #fff #777 #777 #fff; background: #f0f0f0; }
    .media { display: flex; gap: 1px; }
    .zoom { display: flex; flex-direction: column; width: 70px; margin: 0 6px; gap: 2px; }
    .zoom input { appearance: none; width: 100%; height: 11px; margin: 0; background: linear-gradient(#888, #888) 0 4px / 100% 2px no-repeat; }
    .zoom input::-webkit-slider-thumb { appearance: none; width: 5px; height: 11px; background: #f0f0f0; border: 1px solid #777; }
    .ticks { height: 3px; margin: 0 2px; background: repeating-linear-gradient(90deg, #000 0 1px, transparent 1px 7px); }
    .kit { display: flex; gap: 1px; }
    .kit button { border: 0; background: none; color: #555; font-weight: bold; font-size: 15px; }
    .kit button.on { background: #fff; }
    .kit svg { fill: none; stroke: #666; }
  `;

  private facts = [
    "[0601]", "주식종합차트 - 유통비율[48.3]", "거래대금[288,266(백만)]", "시가총액[3,041(억)]", "주식수[82,534(천)]", "유통수[39,837(천)]",
    "EPS[336]", "PBR[0.72]", "배당수익률[0.8]", "PER[10.95]", "ROA[1.9]", "유보율[104.8]", "부채비율[212.8]", "영업이익률[2.0]", "외국인보유[3,323(천)]",
  ];
  private prices: [string, number][] = [
    ["3,915", 125], ["3,860", 176], ["3,806", 227], ["3,752", 279], ["3,698", 333], ["3,643", 385], ["3,589", 439], ["3,535", 495],
    ["3,481", 550], ["3,426", 607], ["3,372", 664], ["3,318", 723], ["3,264", 782], ["3,210", 842],
  ];
  private times: [string, number][] = [
    ["09:10", 291], ["09:20", 515], ["09:30", 769], ["09:40", 1022], ["09:5", 1276], ["10:00", 1529], ["10:10", 1782],
  ];

  private buttons(list: string[], active: string) {
    return html`<div class="group">${list.map((t) => html`<button class=${t === active ? "on" : ""}>${t}</button>`)}</div>`;
  }

  render() {
    return html`
      <main class="window">
        <header class="title">
          <span class="num">1</span>
          <h1>${this.facts.map((f) => html`<span>${f}</span>`)}</h1>
          <div class="tray">
            ${winIcons.map(([n, b, w]) => html`<button aria-label=${n}>${icon(b, w, 14)}</button>`)}
            <span class="bar"></span>
            ${sysIcons.map(([n, b, w]) => html`<button aria-label=${n}>${icon(b, w, 14)}</button>`)}
          </div>
        </header>
        <div class="body">
          <div class="tools">
            <div class="group"><button class="wide" aria-label="패널">${icon(svg`<path d="M3 2h9v10H3z M3 3h9"/><path d="M1 3v8l4-4z" fill="#444"/>`, 14)}</button></div>
            <div class="drop"><select class="period" aria-label="종목 구분"><option>주</option></select>${caret}</div>
            <div class="group"><button class="wide">전</button></div>
            <div class="group"><input class="code" aria-label="종목코드" value="001250"><button class="slim" aria-label="최근 종목">${caret}</button></div>
            <div class="group"><button class="wide" aria-label="종목 검색">${icon(svg`<circle cx="6" cy="5" r="4" stroke="#777"/><path stroke="#777" stroke-width="2" d="M9 8l4 4"/>`, 14)}</button></div>
            <div class="group"><button class="wide" aria-label="음성">${icon(svg`<path fill="#555" stroke="none" d="M1 5h3l4-4v12L4 9H1z"/><path stroke-dasharray="2 1" d="M10 4v6M12.500 4v6"/>`, 14)}</button><button class="slim" aria-label="음성 설정">${icon(svg`<path d="M1 5h6l-3 4z" fill="#555"/>`, 8)}</button></div>
            <div class="name"><span class="tag">신</span><input aria-label="종목명" value="GS글로벌"></div>
            ${this.buttons(["일", "주", "월", "년"], "")}
            ${this.buttons(["분", "초", "틱"], "초")}
            ${this.buttons(["1", "3", "5", "10", "15", "30", "45", "60"], "5")}
            <div class="group"><input class="spin" aria-label="주기" value="5"><button class="slim" aria-label="주기 선택">${caret}</button></div>
            <div class="group"><input class="count" aria-label="표시 개수" value="855"></div>
            <span class="total">/3604</span>
            <div class="group">
              <button aria-label="종목 추가">${icon(svg`<path fill="#444" d="M1 3h4v5H1zM3 1v9"/><path stroke="#999" fill="#999" d="M7 3h3v5H7zM8.500 1v8"/><path stroke-width="2" d="M9 11h6M12 8v6"/>`)}</button>
              <button aria-label="지표 추가">${icon(svg`<path stroke="#777" d="M1 7l4-4 3 4 5-5M5 1l3 2 2 4 3-1"/><path stroke-width="2" d="M8 11h6M11 8v6"/>`)}</button>
              <button aria-label="저장">${icon(svg`<path d="M2 1h9l2 2v10H2zM4 1v4h6V1M4 13V8h7v5"/>`)}</button>
              <button aria-label="설정">${icon(svg`<circle cx="8" cy="7" r="4" stroke-width="2.500"/><circle cx="8" cy="7" r="5.500" stroke-width="2" stroke-dasharray="2 2.300"/>`)}</button>
            </div>
            <label class="check"><input type="checkbox">D</label>
          </div>
          <div class="quotes">
            <div class="strip">
              <div class="cell c1"><span class="rise w1">3,675 ▲</span><span class="rise w2">465</span><span class="rise w3">+14.49%</span></div>
              <div class="cell c2"><span class="w4">78,627,588</span><span class="rise w5">425.77%</span><span class="w3">95.27%</span></div>
              <div class="cell c3"><span>288,726백만</span></div>
              <div class="cell c4"><span>최우선</span><span class="rise">3,675</span><span class="rise">3,670</span></div>
              <div class="cell c5"><span>시</span><span class="rise">3,360</span><span>고</span><span class="rise">3,925</span><span>저</span><span class="rise">3,315</span></div>
            </div>
            <button class="order buy">매수</button><button class="order sell">매도</button>
          </div>

          <section class="chart">
            <div class="axis left">
              ${this.prices.map(([t, y]) => html`<span class="lab" style="top:${pyMain(y + 1)}">${t}</span>`)}
              <button class="table" aria-label="데이터 표">${icon(svg`<path d="M1.500 2.500h9v7h-9zM4.500 2v8M7.500 2v8M1 5.500h10" fill="none" stroke="#444"/>`, 12, 12)}</button>
              <span class="now" style="top:${pyMain(325)}">3,705</span>
              <span class="pct" style="top:${pyMain(337)}">,42%</span>
              <div class="cross" style="top:${pyMain(499)}">3,531<em>10,00%</em></div>
            </div>
            <price-panel></price-panel>
            <div class="axis right">
              <span class="minor"></span>
              <span class="lab top rise" style="top:${pyMain(85)}">LC:15,42</span>
              <span class="lab top hc" style="top:${pyMain(97)}">HC:-5,61</span>
              ${gridMain.map((y, i) => html`<span class="lab" style="top:${pyMain(y)}">${100 - i * 5},00</span>`)}
              <span class="now" style="top:${pyMain(325)}">3,705</span>
              <span class="pct" style="top:${pyMain(337)}">15,42%</span>
              <div class="cross" style="top:${pyMain(499)}">3,531<em>-10,00%</em></div>
            </div>
            <div class="axis left sub">
              ${([["2,000K", 907], ["0,000K", 940], ["8,000K", 972], ["6,000K", 1005]] as [string, number][]).map(([t, y]) => html`<span class="lab" style="top:${pySub(y)}">${t}</span>`)}
            </div>
            <volume-panel></volume-panel>
            <div class="axis right sub">
              <span class="minor"></span>
              ${["2,500K", "2,000K", "1,500K", "1,000K", "500,000"].map((t, i) => html`<span class="lab" style="top:${pySub(gridSub[i])}">${t}</span>`)}
              <button class="close" aria-label="지표 닫기">${icon(svg`<path d="M1 1l4 4M5 1l-4 4"/>`, 6, 6)}</button>
            </div>
            <div class="time left"></div>
            <div class="time">
              <span class="tick first">06/21</span>
              ${this.times.map(([t, x]) => html`<span class="tick" style="left:${px(x)}">${t}</span>`)}
              <span class="mark" style="left:${px(1300)}">2024/06/24(월) 09:53:35</span>
            </div>
            <div class="time right end">10:12:4</div>
          </section>

          <footer class="foot">
            <button aria-label="왼쪽으로">${icon(svg`<path d="M9 2v9L4 6.500z"/>`, 13, 13)}</button>
            <div class="track"><span class="lead"></span><button class="thumb" aria-label="스크롤"></button><span class="tail"></span></div>
            <div class="media">
              <button aria-label="재생">${icon(svg`<path d="M4 2v9l5-4.500z"/>`, 13, 13)}</button>
              <button aria-label="느리게">${icon(svg`<path d="M6 2v9L1 6.500zM11 2v9L6 6.500z"/>`, 13, 13)}</button>
              <button aria-label="정지">${icon(svg`<path d="M3 3h7v7H3z"/>`, 13, 13)}</button>
              <button aria-label="빠르게">${icon(svg`<path d="M2 2v9l5-4.500zM7 2v9l5-4.500z"/>`, 13, 13)}</button>
            </div>
            <div class="zoom"><input type="range" aria-label="배속" min="0" max="100" value="25"><span class="ticks"></span></div>
            <div class="kit">
              ${tools.map(([n, b]) => html`<button class=${n === "십자선" ? "on" : ""} aria-label=${n}>${icon(b, 14, 14)}</button>`)}
              <button>A</button>
            </div>
          </footer>
        </div>
      </main>
    `;
  }
}
